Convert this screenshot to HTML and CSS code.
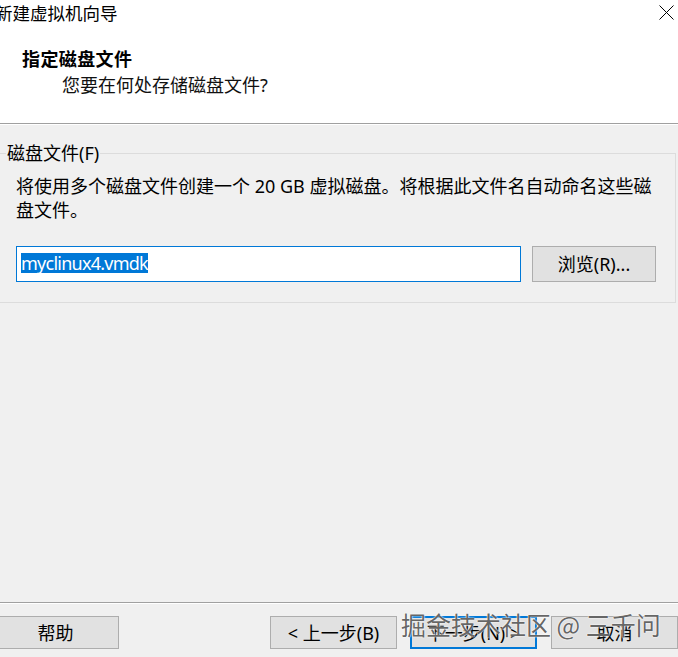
FILE: index.html
```html
<!DOCTYPE html>
<html lang="zh-CN">
<head>
<meta charset="utf-8">
<title>新建虚拟机向导</title>
<link rel="stylesheet" href="styles.css">
</head>
<body>
<div class="dialog">
  <header class="header">
    <div class="titlebar">
      <span class="title">新建虚拟机向导</span>
      <svg class="close" width="15" height="15" viewBox="0 0 15 15" aria-label="关闭">
        <path d="M0.5 0.5 L14.5 14.5 M14.5 0.5 L0.5 14.5" stroke="#000" stroke-width="1" fill="none"/>
      </svg>
    </div>
    <div class="heading">指定磁盘文件</div>
    <div class="subheading">您要在何处存储磁盘文件?</div>
  </header>

  <main class="body">
    <fieldset class="group">
      <legend class="group-label">磁盘文件(F)</legend>
      <p class="desc">将使用多个磁盘文件创建一个 20 GB 虚拟磁盘。将根据此文件名自动命名这些磁盘文件。</p>
      <div class="file-row">
        <div class="textbox"><span class="selected">myclinux4.vmdk</span></div>
        <button class="btn browse">浏览(R)...</button>
      </div>
    </fieldset>
  </main>

  <footer class="footer">
    <button class="btn help">帮助</button>
    <div class="nav">
      <button class="btn">&lt; 上一步(B)</button>
      <button class="btn primary">下一步(N) &gt;</button>
      <button class="btn">取消</button>
    </div>
  </footer>

  <div class="watermark">掘金技术社区 @ 三千问</div>
</div>
</body>
</html>
```

FILE: styles.css
```css
* { box-sizing: border-box; }

html, body {
  margin: 0;
  padding: 0;
  width: 678px;
  height: 657px;
  overflow: hidden;
  background: #f0f0f0;
}

body {
  font-family: "Noto Sans", "Noto Sans CJK SC", sans-serif;
  font-size: 18px;
  color: #000;
}

.dialog {
  position: relative;
  width: 678px;
  height: 657px;
  display: flex;
  flex-direction: column;
}

/* Header */
.header {
  background: #fff;
  height: 124px;
  border-bottom: 1px solid #a0a0a0;
  flex: none;
}

.titlebar {
  height: 26px;
  display: flex;
  align-items: center;
  justify-content: space-between;
  padding-right: 4px;
}

.title {
  font-family: "Noto Sans CJK SC", sans-serif;
  font-size: 17.5px;
  line-height: 26px;
  margin-left: -5px;
}

.close {
  display: block;
  margin-top: -2px;
}

.heading {
  font-family: "Noto Sans CJK SC", sans-serif;
  font-weight: 700;
  font-size: 18px;
  line-height: 24px;
  margin: 20px 0 0 22px;
  letter-spacing: 0.4px;
}

.subheading {
  font-family: "Noto Sans", "Noto Sans CJK SC", sans-serif;
  font-size: 18px;
  line-height: 24px;
  margin: 3px 0 0 62px;
  color: #111;
}

/* Body */
.body {
  flex: 1;
  box-shadow: inset 0 1px 0 #ffffff;
}

.group {
  margin: 17px 2px 0 -4px;
  padding: 9px 19px 20px 19px;
  border: 1px solid #dcdcdc;
  min-width: 0;
}

.group-label {
  margin-left: -10px;
  padding: 0 1px;
  line-height: 24px;
  font-size: 18px;
}

.desc {
  margin: 0;
  line-height: 24px;
  color: #000;
}

.file-row {
  display: flex;
  margin-top: 24px;
}

.textbox {
  width: 505px;
  height: 36px;
  background: #fff;
  border: 1px solid #0078d7;
  padding: 4px 0 0 4px;
  flex: none;
}

.selected {
  display: inline-block;
  background: #0078d7;
  color: #fff;
  font-size: 18px;
  height: 20px;
  line-height: 20px;
  letter-spacing: -0.75px;
}

.btn {
  font-family: "Noto Sans", "Noto Sans CJK SC", sans-serif;
  font-size: 18px;
  color: #000;
  background: #e1e1e1;
  border: 1px solid #adadad;
  padding: 0;
  height: 33px;
  width: 127px;
  line-height: 1;
}

.browse {
  margin-left: 11px;
  width: 124px;
  height: 36px;
}

/* Footer */
.footer {
  flex: none;
  height: 55px;
  border-top: 1px solid #a0a0a0;
  box-shadow: inset 0 1px 0 #ffffff;
  padding-top: 13px;
  display: flex;
  align-items: flex-start;
}

.help {
  margin-left: -8px;
}

.nav {
  margin-left: auto;
  display: flex;
  gap: 13px;
}

.nav .btn:last-child {
  margin-left: 1px;
}

.primary {
  border: 2px solid #0078d7;
}

.watermark {
  position: absolute;
  left: 401px;
  top: 608px;
  font-family: "Noto Sans CJK SC", sans-serif;
  font-size: 25px;
  line-height: 32px;
  color: rgba(60, 60, 60, 0.8);
  text-shadow: 0 0 2px #fff, 0 0 1px #fff;
  white-space: nowrap;
  pointer-events: none;
}
```
